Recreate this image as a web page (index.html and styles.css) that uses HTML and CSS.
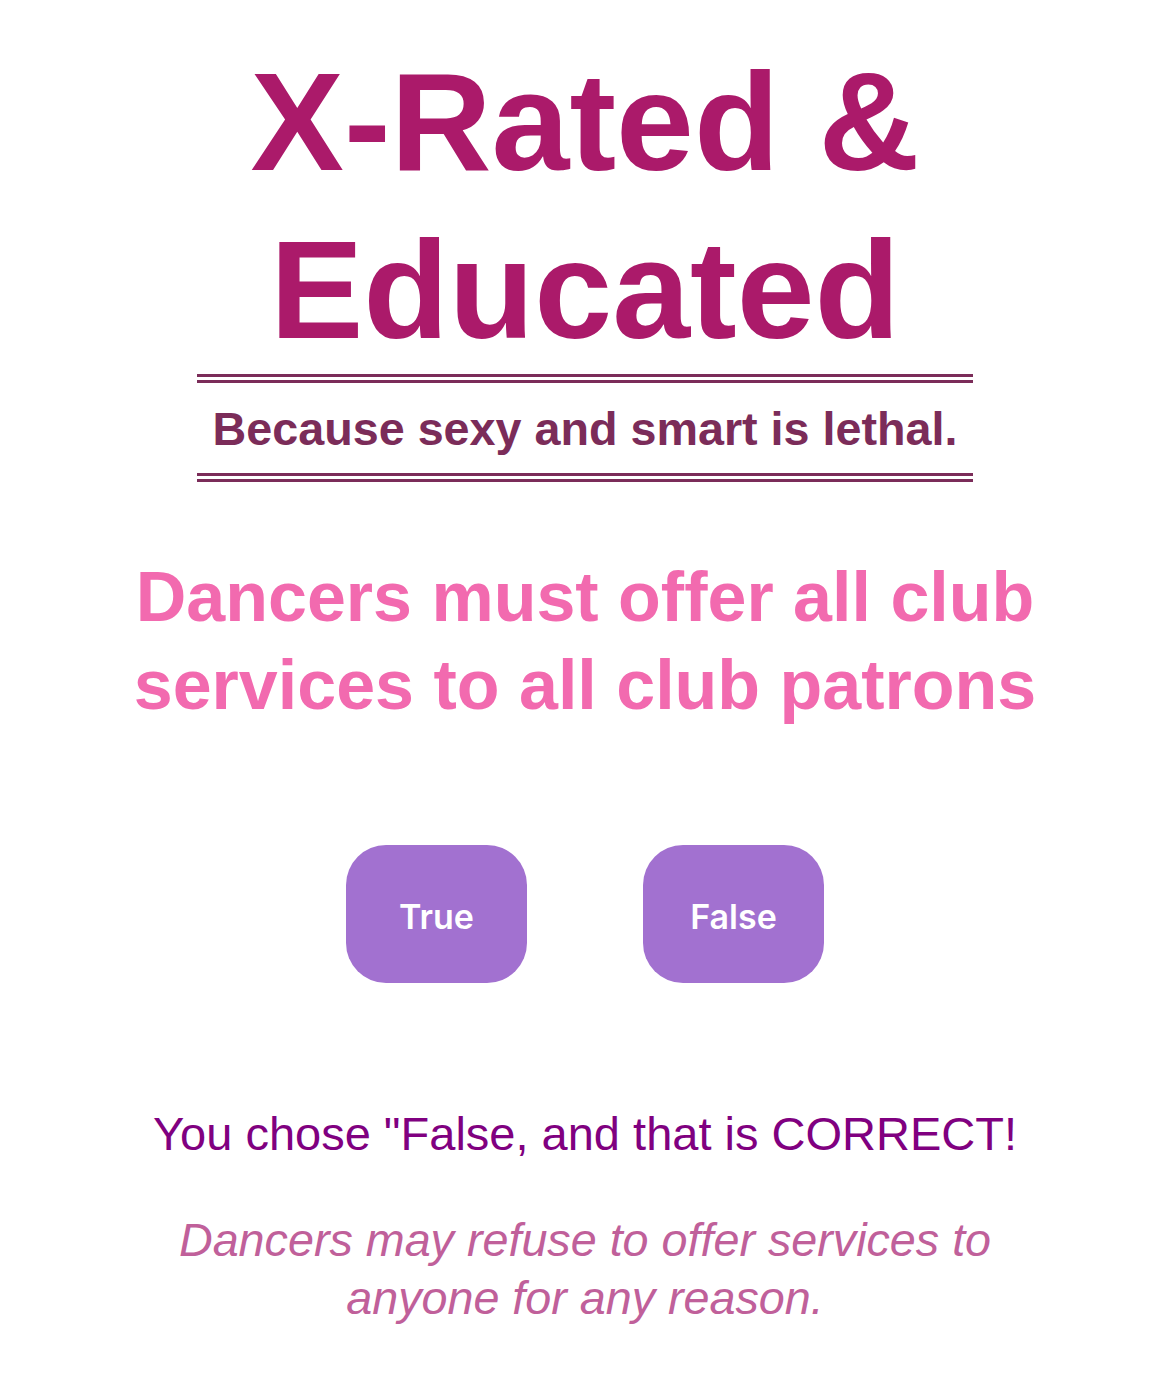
FILE: index.html
```html
<!DOCTYPE html>
<html lang="en">
<head>
<meta charset="utf-8">
<title>X-Rated &amp; Educated</title>
<link rel="stylesheet" href="styles.css">
</head>
<body>
<main class="page">
  <h1 class="title">X-Rated &amp; Educated</h1>
  <div class="banner">Because sexy and smart is lethal.</div>
  <h2 class="question">Dancers must offer all club services to all club patrons</h2>
  <div class="choices">
    <button class="choice" type="button">True</button>
    <button class="choice" type="button">False</button>
  </div>
  <p class="result">You chose "False, and that is CORRECT!</p>
  <p class="explain">Dancers may refuse to offer services to anyone for any reason.</p>
</main>
</body>
</html>
```

FILE: styles.css
```css
html, body {
  margin: 0;
  padding: 0;
  background: #ffffff;
}

body {
  font-family: "Liberation Sans", Arial, Helvetica, sans-serif;
}

.page {
  width: 940px;
  margin: 0 auto;
  display: flex;
  flex-direction: column;
  align-items: center;
  text-align: center;
  padding-top: 38px;
}

.title {
  margin: 0;
  font-size: 140px;
  line-height: 168px;
  font-weight: 700;
  color: #ab1a6a;
  width: 760px;
}

.banner {
  box-sizing: border-box;
  width: 776px;
  height: 108px;
  border-top: 9px double #7b2c59;
  border-bottom: 9px double #7b2c59;
  font-size: 46.7px;
  line-height: 90px;
  font-weight: 700;
  color: #7b2c59;
  padding-top: 1px;
}

.question {
  margin: 71px 0 0;
  font-size: 70px;
  line-height: 88px;
  font-weight: 700;
  color: #f26aaf;
}

.choices {
  display: flex;
  gap: 116px;
  margin-top: 116px;
}

.choice {
  width: 181px;
  height: 138px;
  border: none;
  border-radius: 40px;
  background: #a271d0;
  color: #ffffff;
  font-family: Inter, "Noto Sans", sans-serif;
  font-size: 34px;
  font-weight: 600;
  padding: 5px 0 0;
  cursor: pointer;
}

.result {
  margin: 121px 0 0;
  font-size: 47px;
  line-height: 59px;
  color: #800080;
}

.explain {
  margin: 48px 0 0;
  font-size: 46.7px;
  line-height: 58.3px;
  font-style: italic;
  color: #c0609a;
}
```
